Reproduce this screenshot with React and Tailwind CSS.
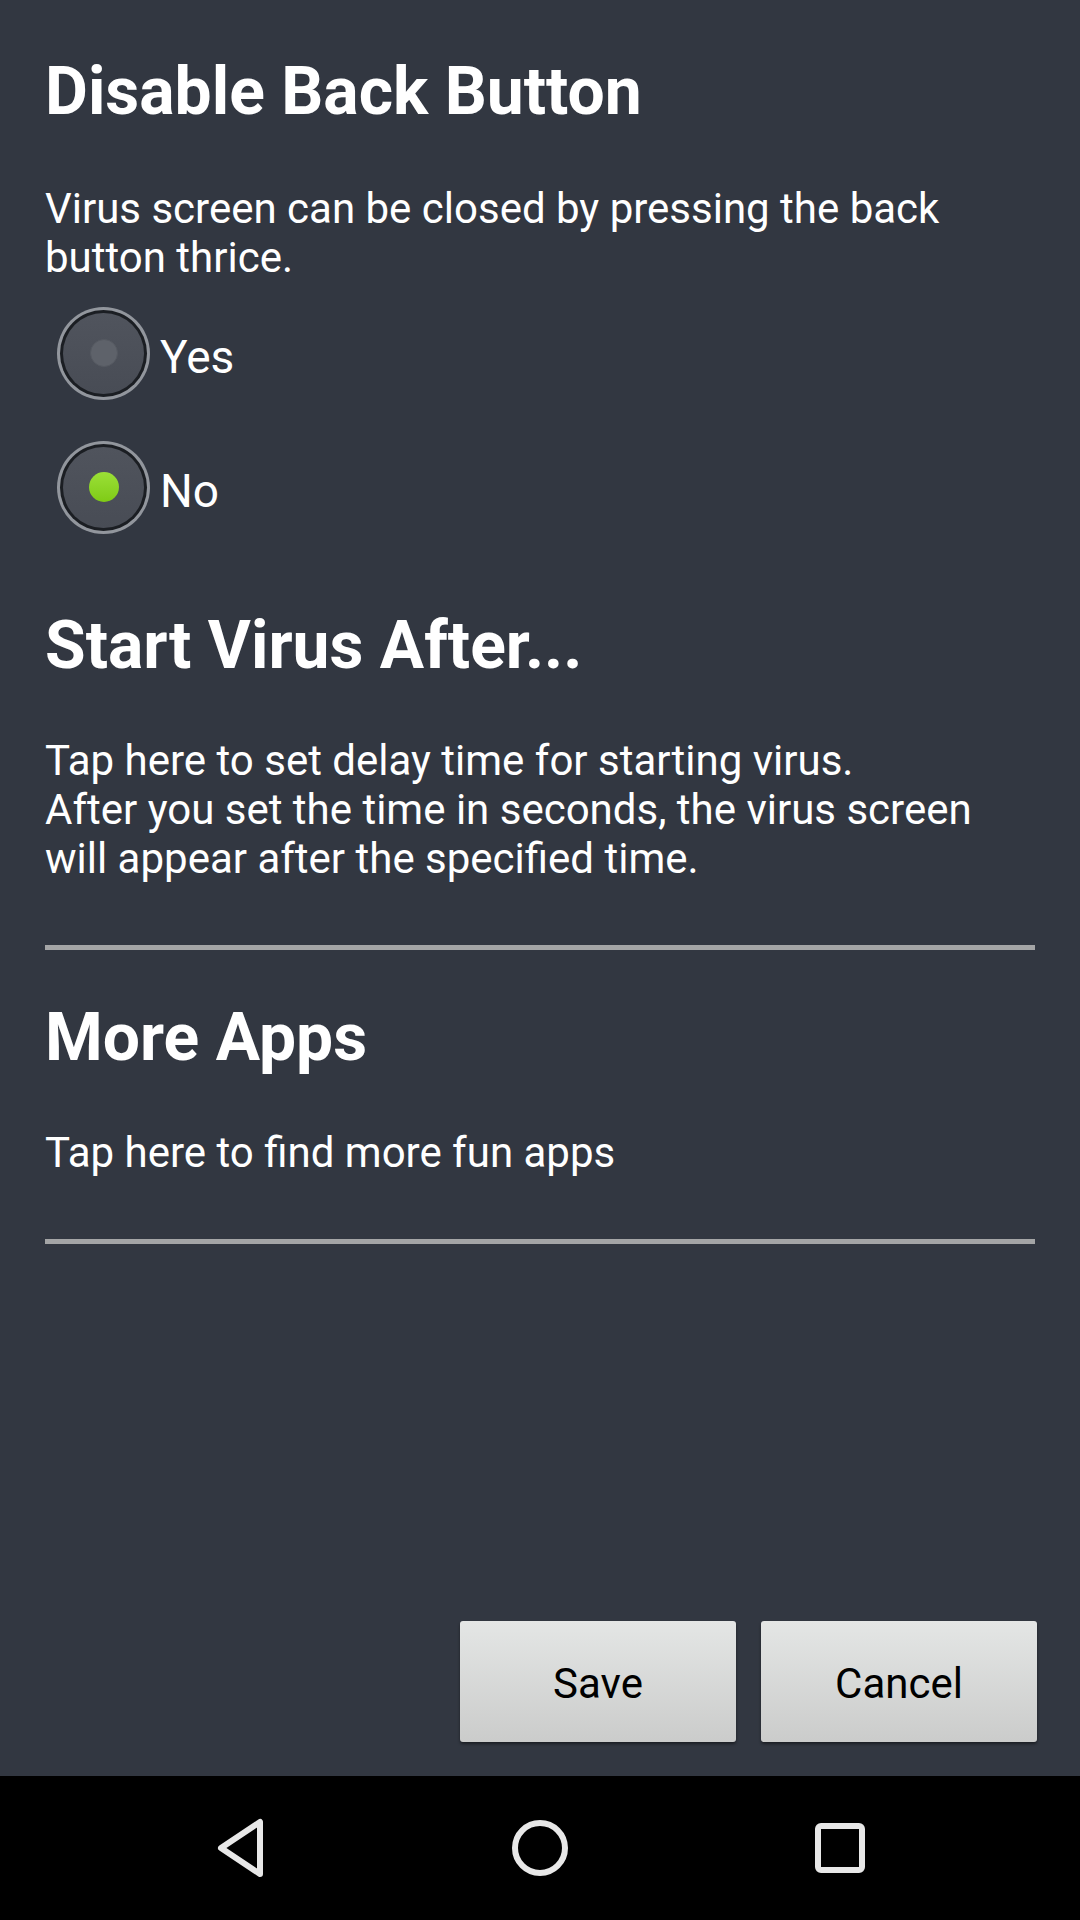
import React, { useState } from 'react';

function Radio({ checked }) {
  return (
    <div className="w-[93px] h-[93px] rounded-full bg-[#92969d] p-[3px] shrink-0">
      <div className="w-full h-full rounded-full bg-[#1b1e23] p-[3px]">
        <div className="w-full h-full rounded-full bg-gradient-to-b from-[#50545d] to-[#484c55] flex items-center justify-center">
          {checked ? (
            <div className="w-[30px] h-[30px] rounded-full bg-gradient-to-b from-[#9be036] to-[#7fcb14]" />
          ) : (
            <div className="w-[28px] h-[28px] rounded-full bg-[#5e626a] border border-[#555961]" />
          )}
        </div>
      </div>
    </div>
  );
}

function Divider() {
  return <div className="h-[5px] bg-[#a4a5a6]" />;
}

export default function App() {
  const [disableBack, setDisableBack] = useState(false);

  return (
    <div
      className="flex flex-col h-screen bg-[#323741] text-white"
      style={{ fontFamily: 'Roboto, "Noto Sans", sans-serif' }}
    >
      <div className="flex-1 flex flex-col">
        <div className="px-[45px]">
          {/* Disable back button */}
          <h1 className="mt-[53px] text-[66px] leading-[77px] font-bold">Disable Back Button</h1>
          <p className="mt-[54px] text-[42px] leading-[49px]">
            Virus screen can be closed by pressing the back button thrice.
          </p>
          <div className="mt-[4px] flex flex-col">
            <button
              onClick={() => setDisableBack(true)}
              className="h-[134px] flex items-center gap-[10px] pl-[12px] text-left"
            >
              <Radio checked={disableBack} />
              <span className="text-[46px] pt-[8px]">Yes</span>
            </button>
            <button
              onClick={() => setDisableBack(false)}
              className="h-[134px] flex items-center gap-[10px] pl-[12px] text-left"
            >
              <Radio checked={!disableBack} />
              <span className="text-[46px] pt-[8px]">No</span>
            </button>
          </div>

          {/* Start virus after */}
          <h2 className="mt-[53px] text-[66px] leading-[77px] font-bold">Start Virus After...</h2>
          <p className="mt-[52px] text-[42px] leading-[49px]">
            Tap here to set delay time for starting virus.
            <br />
            After you set the time in seconds, the virus screen will appear after the specified time.
          </p>
          <div className="mt-[62px]">
            <Divider />
          </div>

          {/* More apps */}
          <h2 className="mt-[49px] text-[66px] leading-[77px] font-bold">More Apps</h2>
          <p className="mt-[52px] text-[42px] leading-[49px]">Tap here to find more fun apps</p>
          <div className="mt-[62px]">
            <Divider />
          </div>
        </div>

        <div className="flex-1" />

        <div className="flex justify-end gap-[25px] pr-[43px] pb-[34px]">
          <button className="w-[276px] h-[121px] rounded-[3px] bg-gradient-to-b from-[#e4e6e5] to-[#cbcccb] shadow-[0_2px_3px_rgba(0,0,0,0.45)] text-black text-[42px] pt-[4px]">
            Save
          </button>
          <button className="w-[276px] h-[121px] rounded-[3px] bg-gradient-to-b from-[#e4e6e5] to-[#cbcccb] shadow-[0_2px_3px_rgba(0,0,0,0.45)] text-black text-[42px] pt-[4px]">
            Cancel
          </button>
        </div>
      </div>

      {/* Android navigation bar */}
      <div className="h-[144px] bg-black flex items-center justify-center gap-[240px]">
        <svg width="60" height="60" viewBox="0 0 60 60">
          <path d="M50 4 L50 56 L11 30 Z" fill="none" stroke="#e8e8e8" strokeWidth="6" strokeLinejoin="round" />
        </svg>
        <svg width="60" height="60" viewBox="0 0 60 60">
          <circle cx="30" cy="30" r="25" fill="none" stroke="#e8e8e8" strokeWidth="6" />
        </svg>
        <svg width="60" height="60" viewBox="0 0 60 60">
          <rect x="8" y="8" width="44" height="44" rx="3" fill="none" stroke="#e8e8e8" strokeWidth="6" />
        </svg>
      </div>
    </div>
  );
}
